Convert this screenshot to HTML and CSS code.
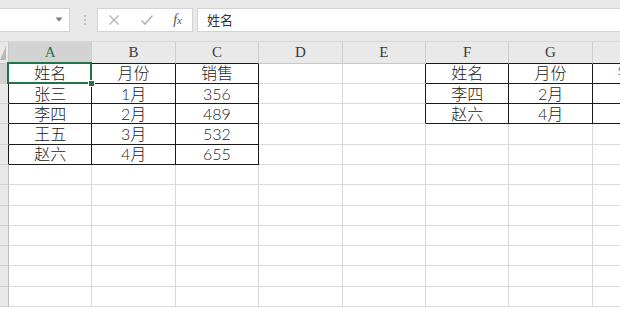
FILE: index.html
```html
<!DOCTYPE html>
<html lang="zh-CN">
<head>
<meta charset="utf-8">
<title>Sheet</title>
<link rel="stylesheet" href="styles.css">
</head>
<body>
<div class="toolbar">
  <div class="namebox">
    <svg class="dd" width="8" height="5" viewBox="0 0 8 5"><path d="M0.5 0.5 L7.5 0.5 L4 4.5 Z" fill="#7a7a7a"/></svg>
  </div>
  <div class="dots"><span></span><span></span><span></span></div>
  <div class="fxbox">
    <svg class="ico" width="12" height="12" viewBox="0 0 12 12"><path d="M1.5 1.5 L10.5 10.5 M10.5 1.5 L1.5 10.5" stroke="#b4b4b4" stroke-width="1.3" fill="none"/></svg>
    <svg class="ico" width="14" height="12" viewBox="0 0 14 12"><path d="M1.5 6.5 L5 10 L12.5 1.5" stroke="#b4b4b4" stroke-width="1.6" fill="none"/></svg>
    <span class="fx"><i>f</i><span class="x">x</span></span>
  </div>
  <div class="formula">姓名</div>
</div>
<div class="sheet">
  <div class="hd corner"><svg width="8" height="22" viewBox="0 0 8 22"><path d="M6 5 L6 19 L0 19 Z" fill="#b9b9b9"/></svg></div>
  <div class="hd sel-col kb">A</div>
  <div class="hd kb">B</div>
  <div class="hd kb">C</div>
  <div class="hd">D</div>
  <div class="hd">E</div>
  <div class="hd kb">F</div>
  <div class="hd kb">G</div>
  <div class="hd kb">H</div>

  <div class="rh sel-row kr"></div>
  <div class="c k active">姓名<span class="sel"><span class="handle"></span></span></div>
  <div class="c k">月份</div>
  <div class="c k">销售</div>
  <div class="c"></div>
  <div class="c kr"></div>
  <div class="c k">姓名</div>
  <div class="c k">月份</div>
  <div class="c k hc">销售</div>

  <div class="rh kr"></div>
  <div class="c k">张三</div>
  <div class="c k">1月</div>
  <div class="c k">356</div>
  <div class="c"></div>
  <div class="c kr"></div>
  <div class="c k">李四</div>
  <div class="c k">2月</div>
  <div class="c k"></div>

  <div class="rh kr"></div>
  <div class="c k">李四</div>
  <div class="c k">2月</div>
  <div class="c k">489</div>
  <div class="c"></div>
  <div class="c kr"></div>
  <div class="c k">赵六</div>
  <div class="c k">4月</div>
  <div class="c k"></div>

  <div class="rh kr"></div>
  <div class="c k">王五</div>
  <div class="c k">3月</div>
  <div class="c k">532</div>
  <div class="c"></div><div class="c"></div><div class="c"></div><div class="c"></div><div class="c"></div>

  <div class="rh kr"></div>
  <div class="c k">赵六</div>
  <div class="c k">4月</div>
  <div class="c k">655</div>
  <div class="c"></div><div class="c"></div><div class="c"></div><div class="c"></div><div class="c"></div>

  <div class="rh"></div><div class="c"></div><div class="c"></div><div class="c"></div><div class="c"></div><div class="c"></div><div class="c"></div><div class="c"></div><div class="c"></div>
  <div class="rh"></div><div class="c"></div><div class="c"></div><div class="c"></div><div class="c"></div><div class="c"></div><div class="c"></div><div class="c"></div><div class="c"></div>
  <div class="rh"></div><div class="c"></div><div class="c"></div><div class="c"></div><div class="c"></div><div class="c"></div><div class="c"></div><div class="c"></div><div class="c"></div>
  <div class="rh"></div><div class="c"></div><div class="c"></div><div class="c"></div><div class="c"></div><div class="c"></div><div class="c"></div><div class="c"></div><div class="c"></div>
  <div class="rh"></div><div class="c"></div><div class="c"></div><div class="c"></div><div class="c"></div><div class="c"></div><div class="c"></div><div class="c"></div><div class="c"></div>
  <div class="rh"></div><div class="c"></div><div class="c"></div><div class="c"></div><div class="c"></div><div class="c"></div><div class="c"></div><div class="c"></div><div class="c"></div>
  <div class="rh"></div><div class="c"></div><div class="c"></div><div class="c"></div><div class="c"></div><div class="c"></div><div class="c"></div><div class="c"></div><div class="c"></div>
</div>
</body>
</html>
```

FILE: styles.css
```css
* { box-sizing: border-box; }
html, body {
  margin: 0;
  padding: 0;
  width: 620px;
  height: 309px;
  overflow: hidden;
  background: #ffffff;
  font-family: "Noto Sans CJK SC", sans-serif;
}
.toolbar {
  height: 41px;
  background: #e8e8e8;
  display: flex;
  align-items: flex-start;
  padding-top: 8px;
}
.namebox {
  width: 71px;
  height: 24px;
  margin-left: -1px;
  background: #ffffff;
  border: 1px solid #d3d3d3;
  display: flex;
  align-items: center;
  justify-content: flex-end;
  padding-right: 6px;
}
.dd { display: block; margin-top: -2px; }
.dots {
  width: 27px;
  height: 24px;
  display: flex;
  flex-direction: column;
  align-items: center;
  justify-content: center;
  gap: 2px;
  padding-left: 2px;
}
.dots span {
  width: 2px;
  height: 2px;
  background: #b0b0b0;
  border-radius: 1px;
}
.fxbox {
  width: 96px;
  height: 24px;
  background: #ffffff;
  border: 1px solid #d3d3d3;
  display: flex;
  align-items: center;
  justify-content: space-between;
  padding: 0 10px 0 10px;
}
.ico { display: block; }
.fx {
  font-family: "Liberation Serif", serif;
  font-size: 14px;
  color: #555555;
  line-height: 1;
}
.fx .x { font-style: italic; font-size: 11px; }
.formula {
  flex: 1;
  height: 24px;
  margin-left: 4px;
  margin-right: -2px;
  background: #ffffff;
  border: 1px solid #d3d3d3;
  font-family: "Noto Sans CJK SC", sans-serif;
  font-size: 13px;
  color: #333333;
  line-height: 22px;
  padding-left: 9px;
}
.sheet {
  width: 620px;
  overflow: hidden;
  display: grid;
  grid-template-columns: 9px repeat(8, 83.4px);
  grid-template-rows: 22.7px;
  grid-auto-rows: 20.27px;
}
.hd {
  background: #e9e9e9;
  border-top: 1px solid #d8d8d8;
  border-right: 1px solid #cfcfcf;
  border-bottom: 1px solid #c8c8c8;
  display: flex;
  align-items: center;
  justify-content: center;
  font-family: "Liberation Serif", serif;
  font-size: 15px;
  color: #3a3a3a;
  padding-top: 1px;
}
.hd.corner { border-right: 1px solid #c8c8c8; justify-content: flex-start; padding-top: 0; }
.hd.corner svg { display: block; }
.hd.sel-col {
  background: #d3d3d3;
  color: #217346;
  border-bottom-color: #217346;
}
.rh {
  background: #e9e9e9;
  border-right: 1px solid #bdbdbd;
  border-bottom: 1px solid #d2d2d2;
}
.rh.sel-row { background: #d3d3d3; }
.c {
  border-right: 1px solid #dadada;
  border-bottom: 1px solid #dadada;
  display: flex;
  align-items: center;
  justify-content: center;
  font-family: "Lato", "Noto Sans CJK SC", sans-serif;
  font-size: 16px;
  font-weight: 300;
  color: #222222;
  white-space: nowrap;
  line-height: 1;
}
.c.hc { justify-content: flex-start; padding-left: 25px; }
.k { border-right-color: #1a1a1a; border-bottom-color: #1a1a1a; }
.kr { border-right-color: #1a1a1a; }
.kb { border-bottom-color: #1a1a1a; }
.active { position: relative; }
.sel {
  position: absolute;
  top: -2px;
  left: -2px;
  right: -1px;
  bottom: -1px;
  border: 2px solid #217346;
}
.handle {
  position: absolute;
  right: -5px;
  bottom: -5px;
  width: 7px;
  height: 7px;
  background: #217346;
  border: 1px solid #ffffff;
}
```
